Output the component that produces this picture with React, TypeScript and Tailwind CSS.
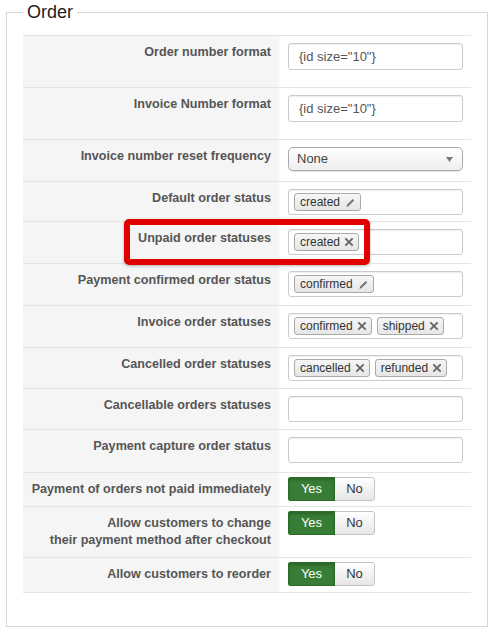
import React from "react";

type Chip = { label: string; icon: "pencil" | "x" };
type Row =
  | { label: string[]; h: number; kind: "text"; value: string }
  | { label: string[]; h: number; kind: "select"; value: string }
  | { label: string[]; h: number; kind: "chips"; chips: Chip[] }
  | { label: string[]; h: number; kind: "toggle" };

const rows: Row[] = [
  { label: ["Order number format"], h: 52, kind: "text", value: '{id size="10"}' },
  { label: ["Invoice Number format"], h: 52, kind: "text", value: '{id size="10"}' },
  { label: ["Invoice number reset frequency"], h: 42, kind: "select", value: "None" },
  { label: ["Default order status"], h: 40, kind: "chips", chips: [{ label: "created", icon: "pencil" }] },
  { label: ["Unpaid order statuses"], h: 42, kind: "chips", chips: [{ label: "created", icon: "x" }] },
  { label: ["Payment confirmed order status"], h: 42, kind: "chips", chips: [{ label: "confirmed", icon: "pencil" }] },
  {
    label: ["Invoice order statuses"],
    h: 42,
    kind: "chips",
    chips: [
      { label: "confirmed", icon: "x" },
      { label: "shipped", icon: "x" },
    ],
  },
  {
    label: ["Cancelled order statuses"],
    h: 41,
    kind: "chips",
    chips: [
      { label: "cancelled", icon: "x" },
      { label: "refunded", icon: "x" },
    ],
  },
  { label: ["Cancellable orders statuses"], h: 41, kind: "chips", chips: [] },
  { label: ["Payment capture order status"], h: 43, kind: "chips", chips: [] },
  { label: ["Payment of orders not paid immediately"], h: 34, kind: "toggle" },
  { label: ["Allow customers to change", "their payment method after checkout"], h: 51, kind: "toggle" },
  { label: ["Allow customers to reorder"], h: 35, kind: "toggle" },
];

function Pencil() {
  return (
    <svg width="11" height="11" viewBox="0 0 10 10" className="ml-[5px]">
      <path d="M2 8.2 L2.4 6.4 L7 1.8 L8.4 3.2 L3.8 7.8 Z" fill="#777" />
      <path d="M1.4 8.8 L2 6.9 L3.3 8.2 Z" fill="#555" />
    </svg>
  );
}

function XIcon() {
  return (
    <svg width="10" height="10" viewBox="0 0 9 9" className="ml-[4px]">
      <path d="M1.2 1.2 L7.8 7.8 M7.8 1.2 L1.2 7.8" stroke="#666" strokeWidth="1.7" />
    </svg>
  );
}

function ChipView({ chip }: { chip: Chip }) {
  return (
    <div className="flex h-[18px] items-center rounded-[3px] border border-[#aaa] bg-gradient-to-b from-[#f6f6f6] to-[#e6e6e6] pl-[5px] pr-[4px] text-[12px] leading-none text-[#333]">
      <span>{chip.label}</span>
      {chip.icon === "pencil" ? <Pencil /> : <XIcon />}
    </div>
  );
}

function Control({ row }: { row: Row }) {
  if (row.kind === "text") {
    return (
      <div className="flex h-[27px] w-[175px] items-center rounded-[3px] border border-[#ccc] bg-white pl-[10px] text-[13px] text-[#555] shadow-[inset_0_1px_1px_rgba(0,0,0,0.07)]">
        {row.value}
      </div>
    );
  }
  if (row.kind === "select") {
    return (
      <div className="flex h-[24px] w-[175px] items-center justify-between rounded-[5px] border border-[#aaa] bg-gradient-to-b from-white to-[#eeeeee] pl-[8px] pr-[9px] text-[13px] text-[#444] shadow-[0_1px_1px_rgba(0,0,0,0.1)]">
        <span>{row.value}</span>
        <svg width="7" height="5" viewBox="0 0 7 5">
          <path d="M0 0 L7 0 L3.5 5 Z" fill="#777" />
        </svg>
      </div>
    );
  }
  if (row.kind === "chips") {
    return (
      <div className="flex h-[26px] w-[175px] items-center gap-[5px] rounded-[3px] border border-[#ccc] bg-white pl-[5px] shadow-[inset_0_1px_1px_rgba(0,0,0,0.07)]">
        {row.chips.map((c, i) => (
          <ChipView key={i} chip={c} />
        ))}
      </div>
    );
  }
  return (
    <div className="flex h-[24px] w-[87px] overflow-hidden rounded-[3px] text-[13px]">
      <div className="flex w-[47px] items-center justify-center border border-[#2c6a2a] bg-[#387d35] text-white shadow-[inset_0_2px_3px_rgba(0,0,0,0.2)]">
        Yes
      </div>
      <div className="flex w-[40px] items-center justify-center rounded-r-[3px] border border-l-0 border-[#c5c5c5] bg-gradient-to-b from-white to-[#e6e6e6] text-[#333]">
        No
      </div>
    </div>
  );
}

export default function App() {
  return (
    <div
      className="relative h-[634px] w-[495px] bg-white"
      style={{ fontFamily: '"Liberation Sans", Arial, sans-serif' }}
    >
      <div className="pt-[1px]">
        <fieldset className="ml-[6px] h-[626px] w-[482px] border border-[#d6d6d6] px-[16px]">
          <legend className="px-[4px] text-[18px] leading-[22px] text-[#222]">Order</legend>
          <div className="mt-[12px] border-b border-[#e4e4e4]">
            {rows.map((row, i) => (
              <div
                key={i}
                className="grid grid-cols-[257px_191px] border-t border-[#e4e4e4]"
                style={{ height: row.h }}
              >
                <div className="border-r border-[#fbfbfb] bg-[#f5f5f5] pr-[8px] pt-[8px] text-right text-[12.6px] font-bold leading-[17px] text-[#555]">
                  {row.label.map((l, j) => (
                    <div key={j}>{l}</div>
                  ))}
                </div>
                <div className={row.kind === "toggle" ? "pl-[8px] pt-[4px]" : "pl-[8px] pt-[7px]"}>
                  <Control row={row} />
                </div>
              </div>
            ))}
          </div>
        </fieldset>
      </div>
      <div className="absolute left-[124px] top-[219px] h-[46px] w-[246px] rounded-[5px] border-[6px] border-[#e10000] shadow-[0_1px_3px_rgba(0,0,0,0.3)]" />
    </div>
  );
}
